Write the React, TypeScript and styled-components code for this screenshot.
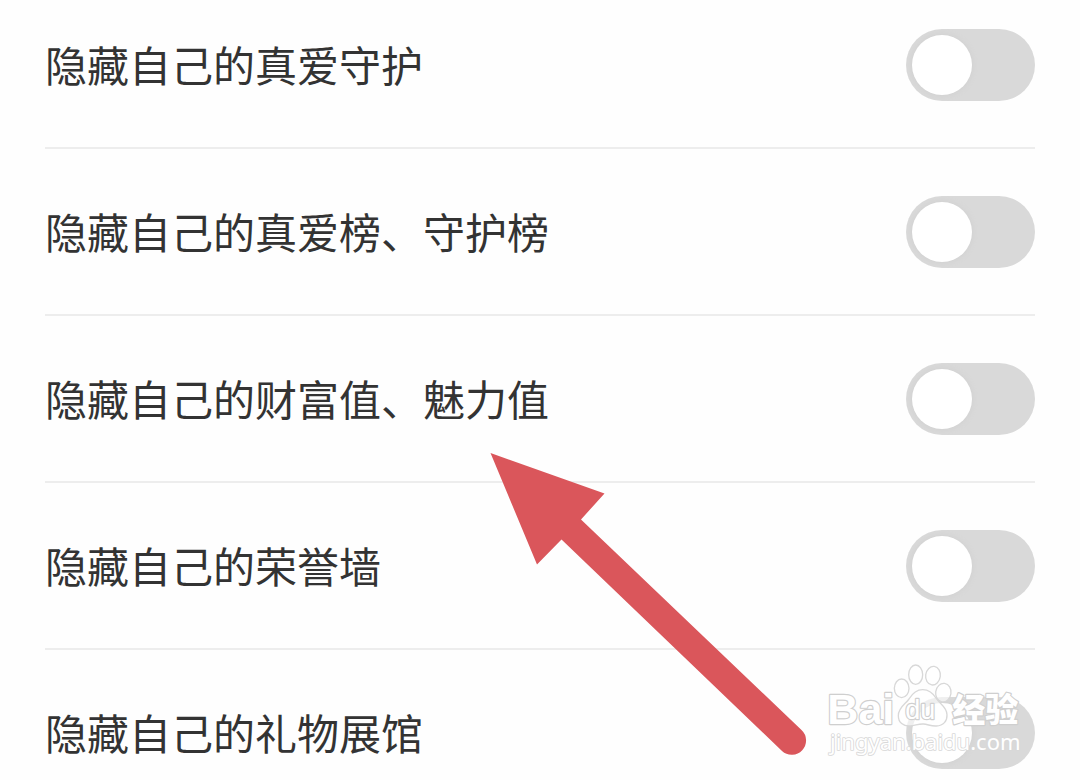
import React from 'react';
import styled, { createGlobalStyle } from 'styled-components';

const GlobalStyle = createGlobalStyle`
  * { box-sizing: border-box; }
  body { margin: 0; background: #fefefe; }
`;

const Screen = styled.main`
  position: relative;
  min-height: 100vh;
  overflow: hidden;
  background: #fefefe;
  color: #333;
  font-family: "Noto Sans CJK SC", sans-serif;
`;

const SettingsList = styled.ul`
  list-style: none;
  margin: 0;
  padding: 0 45px;
`;

const Row = styled.li`
  border-bottom: 2px solid #ededed;
  padding: 47px 0 46px;

  &:first-child { padding-top: 29px; }
  &:last-child { border-bottom: 0; padding-bottom: 0; }
`;

const RowLabel = styled.label`
  display: flex;
  align-items: flex-start;
  justify-content: space-between;
  height: 72px;
`;

const Title = styled.span`
  font-size: 42px;
  line-height: 70px;
`;

const Switch = styled.input`
  appearance: none;
  flex: none;
  display: flex;
  align-items: center;
  width: 129px;
  height: 72px;
  margin: 0;
  padding: 0 6px;
  border-radius: 36px;
  background: #d9d9d9;
  cursor: pointer;

  &::before {
    content: "";
    width: 60px;
    height: 60px;
    border-radius: 50%;
    background: #fff;
    box-shadow: 0 0 6px #cfcfcf;
  }

  &:checked {
    justify-content: flex-end;
    background: #f5587b;
  }
`;

const Pointer = styled.svg`
  position: absolute;
  left: 490px;
  top: 453px;
  pointer-events: none;
`;

const Watermark = styled.svg`
  position: absolute;
  right: 30px;
  top: 650px;
  pointer-events: none;
`;

const settings = [
  '隐藏自己的真爱守护',
  '隐藏自己的真爱榜、守护榜',
  '隐藏自己的财富值、魅力值',
  '隐藏自己的荣誉墙',
  '隐藏自己的礼物展馆',
];

function SettingRow({ title }: { title: string }) {
  return (
    <Row>
      <RowLabel>
        <Title>{title}</Title>
        <Switch type="checkbox" role="switch" />
      </RowLabel>
    </Row>
  );
}

function BaiduMark() {
  return (
    <Watermark width="240" height="130" viewBox="0 0 720 390" aria-hidden="true">
      <g fill="#fff" fillOpacity="0.6" stroke="#d8d8d8" strokeWidth="4">
        <ellipse cx="275" cy="115" rx="22" ry="28" />
        <ellipse cx="317" cy="74" rx="21" ry="29" />
        <ellipse cx="369" cy="77" rx="22" ry="28" transform="rotate(8 369 77)" />
        <ellipse cx="400" cy="128" rx="23" ry="28" transform="rotate(8 400 128)" />
        <path d="M338 119C316 119 305 134 297 147C286 163 265 172 265 197C265 218 280 229 300 228C315 227 326 221 340 222C354 223 363 229 379 228C400 227 412 213 411 194C410 170 390 163 380 147C371 132 359 119 338 119Z" />
      </g>
      <g fill="#fff" stroke="#cfcfcf" strokeWidth="7" strokeLinejoin="round" paintOrder="stroke" fontWeight="700">
        <text x="52" y="223" fontSize="129" fontFamily="Liberation Sans, sans-serif">Bai</text>
        <text x="286" y="208" fontSize="81" fontWeight="400" fontFamily="Liberation Sans, sans-serif">du</text>
        <text x="427" y="216" fontSize="99" fontWeight="900" fontFamily="Noto Sans CJK SC, sans-serif">经验</text>
      </g>
      <text x="60" y="299" fontSize="66" fontFamily="Noto Sans, sans-serif" fill="#fff" stroke="#d8d8d8" strokeWidth="5" strokeLinejoin="round" paintOrder="stroke">
        jingyan.baidu.com
      </text>
    </Watermark>
  );
}

export default function App() {
  return (
    <Screen>
      <GlobalStyle />
      <SettingsList>
        {settings.map((title) => (
          <SettingRow key={title} title={title} />
        ))}
      </SettingsList>
      <Pointer width="318" height="304" viewBox="0 0 318 304" aria-hidden="true">
        <path
          d="M.5 0L114.5 40.5L91 66.5L311.5 277A14.2 14.2 0 0 1 292 298L71.5 86.5L47 111.5Z"
          fill="#da565b"
        />
      </Pointer>
      <BaiduMark />
    </Screen>
  );
}
